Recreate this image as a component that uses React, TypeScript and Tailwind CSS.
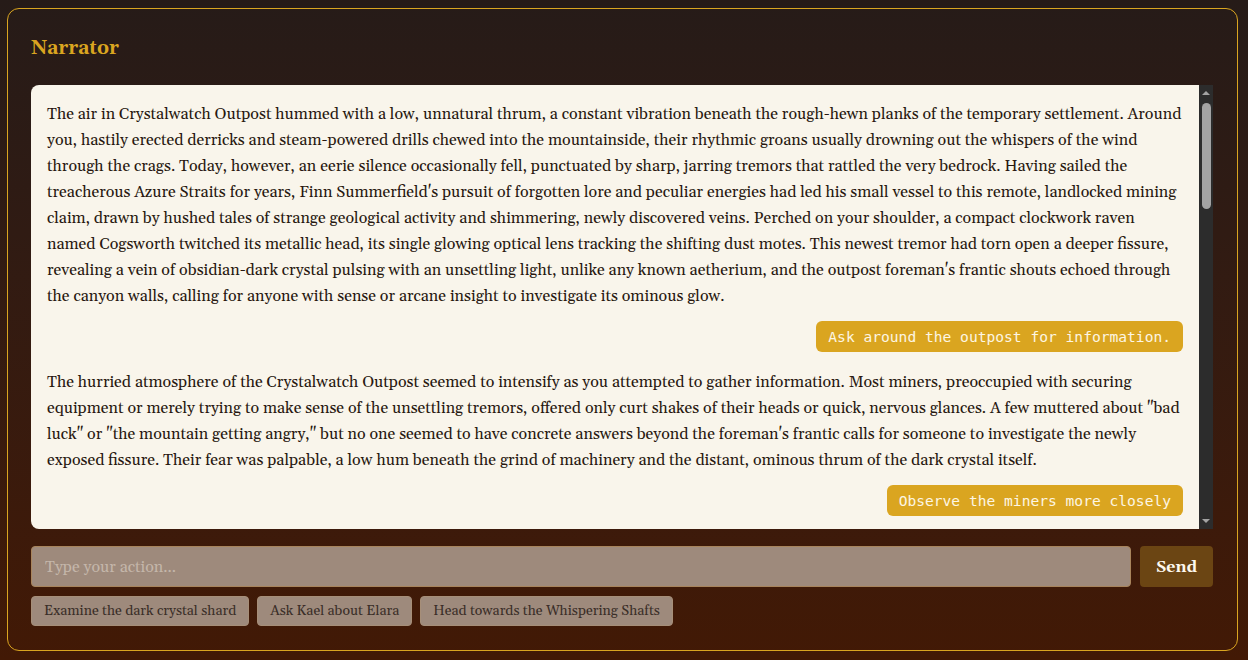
import React from "react";

const serif = "font-['Georgia','Gelasio','DejaVu_Serif',serif]";

const story: { type: "p" | "a"; text: string }[] = [
  {
    type: "p",
    text:
      "The air in Crystalwatch Outpost hummed with a low, unnatural thrum, a constant vibration beneath the rough-hewn planks of the temporary settlement. Around you, hastily erected derricks and steam-powered drills chewed into the mountainside, their rhythmic groans usually drowning out the whispers of the wind through the crags. Today, however, an eerie silence occasionally fell, punctuated by sharp, jarring tremors that rattled the very bedrock. Having sailed the treacherous Azure Straits for years, Finn Summerfield's pursuit of forgotten lore and peculiar energies had led his small vessel to this remote, landlocked mining claim, drawn by hushed tales of strange geological activity and shimmering, newly discovered veins. Perched on your shoulder, a compact clockwork raven named Cogsworth twitched its metallic head, its single glowing optical lens tracking the shifting dust motes. This newest tremor had torn open a deeper fissure, revealing a vein of obsidian-dark crystal pulsing with an unsettling light, unlike any known aetherium, and the outpost foreman's frantic shouts echoed through the canyon walls, calling for anyone with sense or arcane insight to investigate its ominous glow.",
  },
  { type: "a", text: "Ask around the outpost for information." },
  {
    type: "p",
    text:
      "The hurried atmosphere of the Crystalwatch Outpost seemed to intensify as you attempted to gather information. Most miners, preoccupied with securing equipment or merely trying to make sense of the unsettling tremors, offered only curt shakes of their heads or quick, nervous glances. A few muttered about \"bad luck\" or \"the mountain getting angry,\" but no one seemed to have concrete answers beyond the foreman's frantic calls for someone to investigate the newly exposed fissure. Their fear was palpable, a low hum beneath the grind of machinery and the distant, ominous thrum of the dark crystal itself.",
  },
  { type: "a", text: "Observe the miners more closely" },
  {
    type: "p",
    text:
      "You step back from the bustle and watch. The miners move in tight, wary clusters, never straying far from the lanterns. Their hands are calloused and stained, but several bear fresh, faintly luminous scratches along their knuckles, as though they had brushed against something that left a trace of its glow behind. One older miner, his beard streaked with grey dust, keeps glancing toward the fissure and muttering a name under his breath: Elara. Nearby, a wiry young man with a shock of copper hair, whom the others call Kael, clutches a small shard of the dark crystal wrapped in oilcloth, his face pale and drawn.",
  },
  { type: "a", text: "Approach Kael carefully" },
  {
    type: "p",
    text:
      "Kael flinches as you draw near, tucking the wrapped shard tighter against his chest. Cogsworth clicks softly, its lens narrowing on the bundle. \"You're not one of the foreman's men,\" Kael says, voice barely above the rumble of the drills. \"Then maybe you'll listen. My sister, Elara, went down into the Whispering Shafts three nights ago, chasing that light. She never came back up. They say the crystal calls to people. I think it called to her.\" He hesitates, then unwraps a corner of the cloth, revealing a sliver of obsidian stone that pulses in slow rhythm, like a heartbeat.",
  },
  { type: "a", text: "Ask to examine the shard" },
];

export default function App() {
  return (
    <div className={`min-h-[660px] w-full bg-gradient-to-b from-[#261b18] to-[#421905] pt-[8px] ${serif}`}>
      <div className="ml-[7px] flex h-[643px] w-[1231px] flex-col rounded-[12px] border border-[#daa520] pl-[23px] pr-[24px] pt-[27px] pb-[23px]">
        <h2 className="mb-[25px] text-[19px] font-bold leading-[24px] text-[#daa520]">Narrator</h2>
        <div className="flex h-[444px] overflow-hidden rounded-l-[8px]">
          <div className="flex-1 overflow-y-auto bg-[#f9f5eb] px-[16px] pt-[16px] pb-[16px] [scrollbar-width:none]">
            {story.map((s, i) =>
              s.type === "p" ? (
                <p key={i} className="mb-[12px] text-[16px] leading-[26px] text-[#281810]">
                  {s.text}
                </p>
              ) : (
                <div key={i} className="mb-[17px] flex justify-end">
                  <span className="rounded-[6px] bg-[#daa520] px-[12px] py-[6px] font-['DejaVu_Sans_Mono',monospace] text-[14.6px] leading-[19px] text-[#fdf6e3]">
                    {s.text}
                  </span>
                </div>
              )
            )}
          </div>
          <div className="flex w-[14px] flex-col items-center bg-[#2c2c2c]">
            <div className="mt-[6px] h-0 w-0 border-x-[4px] border-b-[4px] border-x-transparent border-b-[#a3a3a3]" />
            <div className="flex w-full flex-1 flex-col items-center pt-[8px]">
              <div className="h-[106px] w-[9px] rounded-full bg-[#a3a3a3]" />
            </div>
            <div className="mb-[6px] h-0 w-0 border-x-[4px] border-t-[4px] border-x-transparent border-t-[#a3a3a3]" />
          </div>
        </div>
        <div className="mt-[17px] flex gap-[9px]">
          <input
            type="text"
            placeholder="Type your action..."
            className={`h-[41px] flex-1 rounded-[4px] border border-[#a8845c] bg-[#9e8a7c] px-[13px] text-[16px] text-[#2a1c14] outline-none placeholder:text-[#c4b6aa] ${serif}`}
          />
          <button className={`h-[41px] w-[73px] rounded-[4px] bg-[#6b4513] text-[16px] font-bold text-[#fdf8ee] ${serif}`}>
            Send
          </button>
        </div>
        <div className="mt-[9px] flex gap-[8px]">
          {["Examine the dark crystal shard", "Ask Kael about Elara", "Head towards the Whispering Shafts"].map((t) => (
            <button
              key={t}
              className={`h-[30px] rounded-[4px] border border-[#a68e78] bg-[#9e8a7c] px-[12px] text-[14px] text-[#3a2e28] ${serif}`}
            >
              {t}
            </button>
          ))}
        </div>
      </div>
    </div>
  );
}
